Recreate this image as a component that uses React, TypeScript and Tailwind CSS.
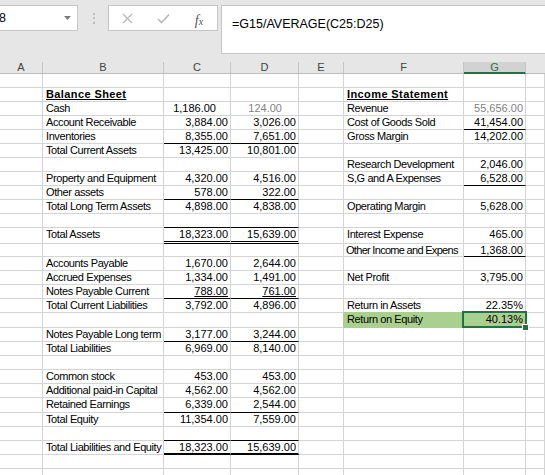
import React from "react";

type B = "grid" | "thin" | "thick" | "double" | "green";
type C = {
  t?: string;
  r?: boolean;
  grey?: boolean;
  bold?: boolean;
  ul?: boolean;
  b?: B;
  pr?: "cash" | "cashd";
  fill?: boolean;
  sel?: boolean;
  rg?: boolean;
  tight?: boolean;
};

type Row = { h: "h14" | "h15" | "h16" | "h13"; cells: Record<number, C> };

const widths = [
  "w-[43px]",
  "w-[121px]",
  "w-[67px]",
  "w-[68px]",
  "w-[45px]",
  "w-[120px]",
  "w-[62px]",
  "flex-1",
];

const heightCls: Record<Row["h"], string> = {
  h13: "h-[13px]",
  h14: "h-[14px]",
  h15: "h-[15px]",
  h16: "h-[16px]",
};

const borderCls: Record<B, string> = {
  grid: "border-b border-b-[#d4d4d4]",
  thin: "border-b border-b-black",
  thick: "border-b-2 border-b-black",
  double: "border-b-[3px] border-double border-b-black",
  green: "border-b border-b-[#a9d08e]",
};

const rows: Row[] = [
  { h: "h14", cells: {} },
  {
    h: "h14",
    cells: {
      1: { t: "Balance Sheet", bold: true, ul: true },
      5: { t: "Income Statement", bold: true, ul: true },
    },
  },
  {
    h: "h14",
    cells: {
      1: { t: "Cash" },
      2: { t: "1,186.00", r: true, pr: "cash" },
      3: { t: "124.00", r: true, grey: true, pr: "cashd" },
      5: { t: "Revenue" },
      6: { t: "55,656.00", r: true, grey: true },
    },
  },
  {
    h: "h14",
    cells: {
      1: { t: "Account Receivable" },
      2: { t: "3,884.00", r: true },
      3: { t: "3,026.00", r: true },
      5: { t: "Cost of Goods Sold" },
      6: { t: "41,454.00", r: true, b: "thin" },
    },
  },
  {
    h: "h14",
    cells: {
      1: { t: "Inventories" },
      2: { t: "8,355.00", r: true, b: "thin" },
      3: { t: "7,651.00", r: true, b: "thin" },
      5: { t: "Gross Margin" },
      6: { t: "14,202.00", r: true },
    },
  },
  {
    h: "h14",
    cells: {
      1: { t: "Total Current Assets" },
      2: { t: "13,425.00", r: true },
      3: { t: "10,801.00", r: true },
    },
  },
  {
    h: "h14",
    cells: {
      5: { t: "Research Development" },
      6: { t: "2,046.00", r: true },
    },
  },
  {
    h: "h14",
    cells: {
      1: { t: "Property and Equipment" },
      2: { t: "4,320.00", r: true },
      3: { t: "4,516.00", r: true },
      5: { t: "S,G and A Expenses" },
      6: { t: "6,528.00", r: true, b: "thin" },
    },
  },
  {
    h: "h14",
    cells: {
      1: { t: "Other assets" },
      2: { t: "578.00", r: true, b: "thin" },
      3: { t: "322.00", r: true, b: "thin" },
    },
  },
  {
    h: "h14",
    cells: {
      1: { t: "Total Long Term Assets" },
      2: { t: "4,898.00", r: true },
      3: { t: "4,838.00", r: true },
      5: { t: "Operating Margin" },
      6: { t: "5,628.00", r: true },
    },
  },
  { h: "h14", cells: { 2: { b: "thin" }, 3: { b: "thin" } } },
  {
    h: "h16",
    cells: {
      1: { t: "Total Assets" },
      2: { t: "18,323.00", r: true, b: "double" },
      3: { t: "15,639.00", r: true, b: "double" },
      5: { t: "Interest Expense" },
      6: { t: "465.00", r: true },
    },
  },
  {
    h: "h13",
    cells: {
      5: { t: "Other Income and Expens", tight: true },
      6: { t: "1,368.00", r: true, b: "thin" },
    },
  },
  {
    h: "h14",
    cells: {
      1: { t: "Accounts Payable" },
      2: { t: "1,670.00", r: true },
      3: { t: "2,644.00", r: true },
    },
  },
  {
    h: "h14",
    cells: {
      1: { t: "Accrued Expenses" },
      2: { t: "1,334.00", r: true },
      3: { t: "1,491.00", r: true },
      5: { t: "Net Profit" },
      6: { t: "3,795.00", r: true },
    },
  },
  {
    h: "h14",
    cells: {
      1: { t: "Notes Payable Current" },
      2: { t: "788.00", r: true, ul: true, b: "thin" },
      3: { t: "761.00", r: true, ul: true, b: "thin" },
    },
  },
  {
    h: "h14",
    cells: {
      1: { t: "Total Current Liabilities" },
      2: { t: "3,792.00", r: true },
      3: { t: "4,896.00", r: true },
      5: { t: "Return in Assets", b: "green" },
      6: { t: "22.35%", r: true },
    },
  },
  {
    h: "h15",
    cells: {
      4: { rg: true },
      5: { t: "Return on Equity", fill: true, b: "green", rg: true },
      6: { t: "40.13%", r: true, fill: true, sel: true, b: "green", rg: true },
    },
  },
  {
    h: "h14",
    cells: {
      1: { t: "Notes Payable Long term" },
      2: { t: "3,177.00", r: true, b: "thin" },
      3: { t: "3,244.00", r: true, b: "thin" },
    },
  },
  {
    h: "h14",
    cells: {
      1: { t: "Total Liabilities" },
      2: { t: "6,969.00", r: true },
      3: { t: "8,140.00", r: true },
    },
  },
  { h: "h14", cells: {} },
  {
    h: "h14",
    cells: {
      1: { t: "Common stock" },
      2: { t: "453.00", r: true },
      3: { t: "453.00", r: true },
    },
  },
  {
    h: "h14",
    cells: {
      1: { t: "Additional paid-in Capital" },
      2: { t: "4,562.00", r: true },
      3: { t: "4,562.00", r: true },
    },
  },
  {
    h: "h15",
    cells: {
      1: { t: "Retained Earnings" },
      2: { t: "6,339.00", r: true, b: "thin" },
      3: { t: "2,544.00", r: true, b: "thin" },
    },
  },
  {
    h: "h14",
    cells: {
      1: { t: "Total Equity" },
      2: { t: "11,354.00", r: true },
      3: { t: "7,559.00", r: true },
    },
  },
  { h: "h14", cells: { 2: { b: "thin" }, 3: { b: "thin" } } },
  {
    h: "h14",
    cells: {
      1: { t: "Total Liabilities and Equity" },
      2: { t: "18,323.00", r: true, b: "thick" },
      3: { t: "15,639.00", r: true, b: "thick" },
    },
  },
  { h: "h14", cells: {} },
  { h: "h14", cells: {} },
];

function Cell({ c, col, h }: { c?: C; col: number; h: string }) {
  const spec = c || {};
  const b = borderCls[spec.b || "grid"];
  const right = spec.rg ? "border-r border-r-[#a9d08e]" : "border-r border-r-[#d4d4d4]";
  const align = spec.r ? "text-right" : "text-left";
  const pad = spec.r
    ? spec.pr === "cash"
      ? "pr-[14px]"
      : spec.pr === "cashd"
      ? "pr-[16px]"
      : "pr-[2px]"
    : spec.tight
    ? "pl-[2px]"
    : "pl-[3px]";
  const color = spec.grey ? "text-[#7f7f7f]" : "text-black";
  const fill = spec.fill ? "bg-[#a9d08e]" : "";
  const weight = spec.bold
    ? "font-bold tracking-[0.4px]"
    : spec.r
    ? ""
    : spec.tight
    ? "tracking-[-0.7px]"
    : "tracking-[-0.4px]";
  return (
    <div
      className={`relative shrink-0 ${widths[col]} ${h} ${b} ${right} ${fill} ${align} ${pad} ${color} ${weight} whitespace-nowrap text-[11px] leading-[13px]`}
    >
      <div className="overflow-hidden">
        {spec.t ? (
          spec.ul ? (
            <span className="underline underline-offset-[1px]">{spec.t}</span>
          ) : (
            spec.t
          )
        ) : (
          "\u00a0"
        )}
      </div>
      {spec.sel && (
        <>
          <div className="absolute -left-[2px] -right-[2px] -top-[2px] -bottom-[1px] border-2 border-[#217346] z-10" />
          <div className="absolute -right-[4px] -bottom-[4px] w-[7px] h-[7px] bg-[#217346] border border-white z-20" />
        </>
      )}
    </div>
  );
}

const headers = ["A", "B", "C", "D", "E", "F", "G", ""];

export default function App() {
  return (
    <div className="w-[545px] h-[475px] overflow-hidden bg-white font-['Liberation_Sans',Arial,sans-serif] select-none">
      {/* Formula bar area */}
      <div className="h-[62px] bg-[#e6e6e6] pt-[5px] flex items-start">
        <div className="w-[78px] h-[26px] bg-white border border-l-0 border-[#c6c6c6] flex items-center justify-between pr-[6px] shrink-0">
          <span className="text-[12.5px] text-black -ml-[1px] pt-[1px] leading-none">8</span>
          <svg width="7" height="4" viewBox="0 0 7 4">
            <path d="M0 0 L7 0 L3.5 4 Z" fill="#7a7a7a" />
          </svg>
        </div>
        <div className="w-[30px] h-[26px] shrink-0 flex flex-col items-center justify-center gap-[2.5px] pl-[1px]">
          <div className="w-[2px] h-[2px] bg-[#bdbdbd]" />
          <div className="w-[2px] h-[2px] bg-[#bdbdbd]" />
          <div className="w-[2px] h-[2px] bg-[#bdbdbd]" />
        </div>
        <div className="w-[110px] h-[26px] shrink-0 bg-white border border-[#c6c6c6] flex items-center">
          <div className="w-[36px] flex justify-center pl-[1px]">
            <svg width="11" height="11" viewBox="0 0 11 11">
              <path d="M1 1 L10 10 M10 1 L1 10" stroke="#b9b9b9" strokeWidth="1.3" fill="none" />
            </svg>
          </div>
          <div className="w-[36px] flex justify-center pl-[1px]">
            <svg width="13" height="11" viewBox="0 0 13 11">
              <path d="M1 6 L4.5 9.5 L12 1.5" stroke="#b9b9b9" strokeWidth="1.6" fill="none" />
            </svg>
          </div>
          <div className="w-[36px] flex justify-center mt-[5px]">
            <span className="font-['Liberation_Serif',serif] italic text-[14px] text-[#555] leading-none">
              f<span className="text-[10px]">x</span>
            </span>
          </div>
        </div>
        <div className="ml-[3px] flex-1 h-[49px] bg-white border border-r-0 border-[#c6c6c6] pl-[10px] pt-[5px]">
          <span className="text-[12.5px] text-black leading-[15px]">=G15/AVERAGE(C25:D25)</span>
        </div>
      </div>
      {/* Column headers */}
      <div className="flex h-[12px] bg-[#e6e6e6] border-b border-b-[#bdbdbd]">
        {headers.map((hd, i) => (
          <div
            key={i}
            className={`shrink-0 ${widths[i]} h-[11px] text-center text-[11px] leading-[11px] ${
              i === 6
                ? "bg-[#d2d2d2] text-[#217346] border-b-2 border-b-[#217346] h-[12px]"
                : "text-[#444]"
            } ${i < 7 ? "border-r border-r-[#c6c6c6]" : ""}`}
          >
            {hd}
          </div>
        ))}
      </div>
      {/* Grid */}
      <div className="flex flex-col">
        {rows.map((row, ri) => (
          <div key={ri} className="flex">
            {widths.map((_, ci) => (
              <Cell key={ci} c={row.cells[ci]} col={ci} h={heightCls[row.h]} />
            ))}
          </div>
        ))}
      </div>
    </div>
  );
}
